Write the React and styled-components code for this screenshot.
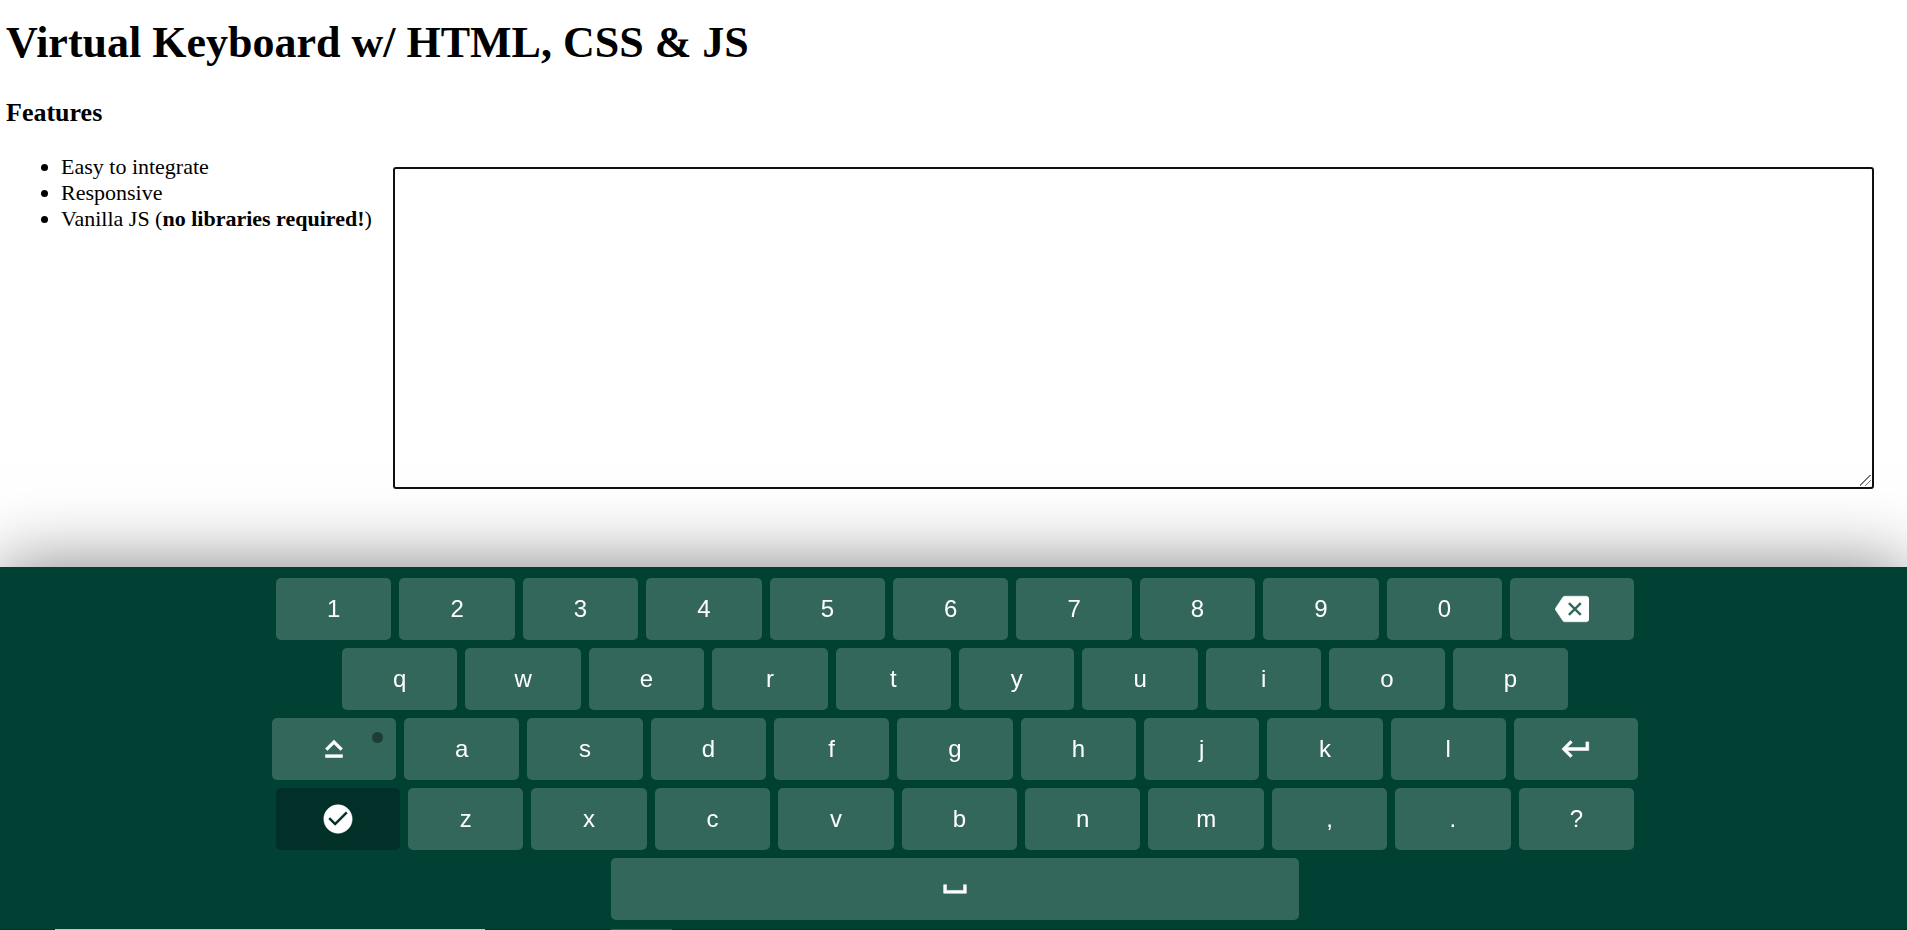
import React, { useState } from "react";
import styled, { createGlobalStyle } from "styled-components";
import {
  MdBackspace,
  MdKeyboardCapslock,
  MdKeyboardReturn,
  MdCheckCircle,
  MdSpaceBar,
} from "react-icons/md";

const GlobalStyle = createGlobalStyle`
  *, *::before, *::after { box-sizing: border-box; }
  body {
    margin: 0;
    background: #fff;
    color: #000;
    font-family: "Liberation Serif", "Times New Roman", serif;
    font-size: 22px;
    line-height: 26px;
  }
`;

const Page = styled.main`
  padding: 18px 33px 0 6px;
`;

const Title = styled.h1`
  margin: 0 0 30px;
  font-size: 44px;
  line-height: 50px;
`;

const Subtitle = styled.h3`
  margin: 0 0 26px;
  font-size: 26px;
  line-height: 30px;
`;

const Content = styled.div`
  display: flex;
  align-items: flex-start;
  gap: 21px;
`;

const FeatureList = styled.ul`
  flex: none;
  margin: 0;
  padding-left: 55px;
`;

const Editor = styled.textarea`
  flex: 1;
  min-width: 0;
  height: 322px;
  margin-top: 13px;
  padding: 4px;
  border: 2px solid #101010;
  border-radius: 3px;
  outline: none;
  background: #fff;
  font: 18px "Liberation Mono", monospace;
  resize: both;

  &::-webkit-resizer {
    background: linear-gradient(
      135deg,
      transparent 7px,
      #777 7px 8px,
      transparent 8px 11px,
      #777 11px 12px,
      transparent 12px
    ) 3px 3px / 11px 11px no-repeat;
  }
`;

const KeyboardPanel = styled.section`
  position: fixed;
  left: 0;
  right: 0;
  bottom: 0;
  background: #004134;
  box-shadow: 0 0 69px rgba(0, 0, 0, 0.5);
  user-select: none;
`;

const Keys = styled.div`
  display: flex;
  flex-direction: column;
  align-items: center;
  gap: 8px;
  padding: 11px 0 9px 3px;
`;

const KeyRow = styled.div`
  display: flex;
  gap: 8px;
  width: 100%;
  max-width: ${(p) => p.$max}px;
`;

const Key = styled.button`
  position: relative;
  display: flex;
  align-items: center;
  justify-content: center;
  flex: ${(p) => (p.$wide ? "0 1 124px" : "1 1 0")};
  min-width: 0;
  height: 62px;
  padding: 0;
  border: none;
  border-radius: 5px;
  outline: none;
  background: ${(p) => (p.$dark ? "rgba(0, 0, 0, 0.25)" : "rgba(255, 255, 255, 0.2)")};
  color: #fff;
  font-family: "Liberation Sans", Arial, sans-serif;
  font-size: 24px;
  line-height: 28px;
  cursor: pointer;

  svg {
    width: 34px;
    height: 34px;
  }

  svg path[fill="none"] {
    stroke: none;
  }
`;

const CapsLight = styled.span`
  position: absolute;
  top: 14px;
  right: 13px;
  width: 11px;
  height: 11px;
  border-radius: 50%;
  background: ${(p) => (p.$on ? "#08ff00" : "rgba(0, 0, 0, 0.4)")};
`;

const BottomEdge = styled.div`
  height: 1px;
  background: linear-gradient(
    to right,
    #1f2428 55px,
    #b5cac5 55px 485px,
    #1f2428 485px 611px,
    #4c5456 611px 672px,
    #1f2428 672px
  );
`;

const ICONS = {
  backspace: MdBackspace,
  caps: MdKeyboardCapslock,
  enter: MdKeyboardReturn,
  done: MdCheckCircle,
  space: MdSpaceBar,
};

const ROWS = [
  { max: 1358, keys: [..."1234567890", "backspace"] },
  { max: 1226, keys: [..."qwertyuiop"] },
  { max: 1366, keys: ["caps", ..."asdfghjkl", "enter"] },
  { max: 1358, keys: ["done", ..."zxcvbnm,.?"] },
  { max: 688, keys: ["space"] },
];

const INSERTS = { enter: "\n", space: " " };

export default function App() {
  const [text, setText] = useState("");
  const [caps, setCaps] = useState(false);
  const [open, setOpen] = useState(true);

  const press = (key) => {
    if (key === "backspace") setText((t) => t.slice(0, -1));
    else if (key === "caps") setCaps((c) => !c);
    else if (key === "done") setOpen(false);
    else setText((t) => t + (INSERTS[key] || (caps ? key.toUpperCase() : key)));
  };

  return (
    <>
      <GlobalStyle />
      <Page>
        <Title>Virtual Keyboard w/ HTML, CSS &amp; JS</Title>
        <Subtitle>Features</Subtitle>
        <Content>
          <FeatureList>
            <li>Easy to integrate</li>
            <li>Responsive</li>
            <li>
              Vanilla JS (<strong>no libraries required!</strong>)
            </li>
          </FeatureList>
          <Editor
            aria-label="Text"
            value={text}
            onChange={(e) => setText(e.target.value)}
            onFocus={() => setOpen(true)}
          />
        </Content>
      </Page>
      {open && (
        <KeyboardPanel aria-label="Keyboard">
          <Keys>
            {ROWS.map((row, i) => (
              <KeyRow key={i} $max={row.max}>
                {row.keys.map((key) => {
                  const Icon = ICONS[key];
                  return (
                    <Key
                      key={key}
                      type="button"
                      $wide={Icon && key !== "space"}
                      $dark={key === "done"}
                      aria-label={Icon ? key : undefined}
                      onClick={() => press(key)}
                    >
                      {Icon ? <Icon strokeWidth="0.4" /> : caps ? key.toUpperCase() : key}
                      {key === "caps" && <CapsLight $on={caps} />}
                    </Key>
                  );
                })}
              </KeyRow>
            ))}
          </Keys>
          <BottomEdge />
        </KeyboardPanel>
      )}
    </>
  );
}
